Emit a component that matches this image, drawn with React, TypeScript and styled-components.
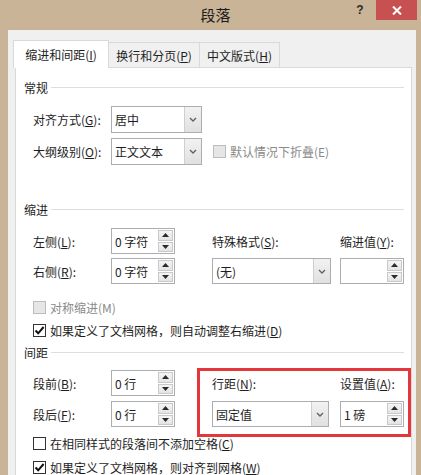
import styled, { createGlobalStyle } from "styled-components";

const GlobalStyle = createGlobalStyle`
  html, body { margin: 0; padding: 0; }
  body {
    width: 421px;
    height: 475px;
    overflow: hidden;
    font-family: "Noto Sans CJK SC", "Noto Sans", sans-serif;
    font-size: 12px;
    color: #1e1e1e;
  }
  * { box-sizing: border-box; }
`;

const Window = styled.div`
  display: flex;
  flex-direction: column;
  width: 421px;
  height: 475px;
  background: #c9b497;
  overflow: hidden;
`;

const TitleBar = styled.div`
  display: grid;
  grid-template-columns: 1fr auto 1fr;
  height: 30px;
  padding-left: 10px;
  flex-shrink: 0;
`;

const Title = styled.div`
  grid-column: 2;
  align-self: center;
  font-size: 15px;
  line-height: 30px;
  color: #1a1a1a;
`;

const Controls = styled.div`
  justify-self: end;
  align-self: start;
  display: flex;
  gap: 4px;
  height: 20px;
  margin-right: 4px;
`;

const HelpButton = styled.div`
  display: flex;
  align-items: center;
  justify-content: center;
  width: 24px;
  font-family: "Liberation Sans", Arial, sans-serif;
  font-weight: bold;
  font-size: 12px;
  color: #2b2b2b;
`;

const CloseButton = styled.div`
  display: flex;
  align-items: center;
  justify-content: center;
  width: 41px;
  background: #c75050;
`;

const Client = styled.div`
  flex: 1;
  display: flex;
  flex-direction: column;
  min-height: 0;
  margin: 0 5px 0 8px;
  padding: 10px 4px 0 7px;
  background: #f0f0f0;
`;

const TabList = styled.div`
  display: flex;
  align-items: flex-end;
  height: 27px;
  margin-left: -2px;
  position: relative;
  z-index: 1;
`;

const Tab = styled.div<{ $active?: boolean; $width: number }>`
  display: flex;
  align-items: center;
  justify-content: center;
  width: ${(p) => p.$width}px;
  height: ${(p) => (p.$active ? 28 : 25)}px;
  margin-bottom: ${(p) => (p.$active ? -1 : 0)}px;
  margin-left: ${(p) => (p.$active ? 0 : -1)}px;
  padding-bottom: ${(p) => (p.$active ? 1 : 0)}px;
  border: 1px solid #d9d9d9;
  border-bottom: none;
  background: ${(p) => (p.$active ? "#ffffff" : "#f0f0f0")};
  color: #1e1e1e;
  white-space: nowrap;
`;

const Panel = styled.div`
  flex: 1;
  background: #ffffff;
  border: 1px solid #d9d9d9;
  border-bottom: none;
  padding: 12px 7px 0 8px;
`;

const SectionHeader = styled.div<{ $top: number }>`
  display: flex;
  align-items: center;
  gap: 3px;
  height: 16px;
  line-height: 16px;
  margin-top: ${(p) => p.$top}px;
`;

const HeaderRule = styled.div`
  flex: 1;
  height: 1px;
  margin-top: -1px;
  background: #dcdfe2;
`;

const FormStack = styled.div`
  display: flex;
  flex-direction: column;
  gap: 5px;
  margin: 10px 0 0 9px;
`;

const Row = styled.div`
  display: flex;
  align-items: center;
  height: 27px;
`;

const FieldLabel = styled.div`
  width: 78px;
  white-space: nowrap;
`;

const GridLabel = styled.div`
  white-space: nowrap;
`;

const FieldGrid = styled.div<{ $gap: number; $top: number }>`
  position: relative;
  display: grid;
  grid-template-columns: 78px 101px 128px 64px;
  grid-template-rows: 26px 26px;
  row-gap: ${(p) => p.$gap}px;
  align-items: center;
  margin: ${(p) => p.$top}px 0 0 9px;
`;

const Highlight = styled.div`
  position: absolute;
  left: 164px;
  top: -2px;
  width: 214px;
  height: 69px;
  border: 3px solid #e4373c;
  pointer-events: none;
`;

const SelectBox = styled.div<{ $width: number }>`
  display: flex;
  width: ${(p) => p.$width}px;
  height: 100%;
  border: 1px solid #abadb3;
  background: #ffffff;
`;

const BoxValue = styled.div`
  flex: 1;
  display: flex;
  align-items: center;
  padding-left: 3px;
  white-space: nowrap;
`;

const DropButton = styled.div`
  display: flex;
  align-items: center;
  justify-content: center;
  width: 17px;
  border-left: 1px solid #cfcfcf;
  background: linear-gradient(#f2f2f2, #e0e0e0);
`;

const SpinBox = styled.div`
  display: flex;
  width: 64px;
  height: 100%;
  border: 1px solid #abadb3;
  background: #ffffff;
`;

const SpinButtons = styled.div`
  display: flex;
  flex-direction: column;
  gap: 1px;
  width: 16px;
  padding: 1px 1px 1px 0;
`;

const SpinButton = styled.div`
  flex: 1;
  display: flex;
  align-items: center;
  justify-content: center;
  border: 1px solid #c9c9c9;
  background: linear-gradient(#f4f4f4, #e4e4e4);
`;

const CheckList = styled.div<{ $gap: number; $top: number }>`
  display: flex;
  flex-direction: column;
  gap: ${(p) => p.$gap}px;
  margin: ${(p) => p.$top}px 0 0 9px;
`;

const CheckRow = styled.div<{ $disabled?: boolean; $indent?: number }>`
  display: flex;
  align-items: center;
  gap: 4px;
  height: 16px;
  margin-left: ${(p) => p.$indent ?? 0}px;
  color: ${(p) => (p.$disabled ? "#8a8a8a" : "#1e1e1e")};
  white-space: nowrap;
`;

const CheckSquare = styled.div<{ $disabled?: boolean }>`
  display: flex;
  align-items: center;
  justify-content: center;
  width: 13px;
  height: 13px;
  border: 1px solid ${(p) => (p.$disabled ? "#bcbcbc" : "#333333")};
  background: ${(p) => (p.$disabled ? "#e6e6e6" : "#ffffff")};
`;

const Key = styled.span`
  text-decoration: underline;
  text-underline-offset: 1px;
`;

const Chevron = () => (
  <svg width="8" height="5" viewBox="0 0 8 5">
    <path d="M1 1 L4 4 L7 1" fill="none" stroke="#5f5f5f" strokeWidth="1.3" />
  </svg>
);

const Triangle = ({ up }: { up?: boolean }) => (
  <svg width="7" height="4" viewBox="0 0 7 4">
    <polygon points={up ? "0,4 3.5,0 7,4" : "0,0 3.5,4 7,0"} fill="#2a2a2a" />
  </svg>
);

const Select = ({ width, value }: { width: number; value: string }) => (
  <SelectBox $width={width}>
    <BoxValue>{value}</BoxValue>
    <DropButton>
      <Chevron />
    </DropButton>
  </SelectBox>
);

const Spin = ({ value }: { value: string }) => (
  <SpinBox>
    <BoxValue>{value}</BoxValue>
    <SpinButtons>
      <SpinButton>
        <Triangle up />
      </SpinButton>
      <SpinButton>
        <Triangle />
      </SpinButton>
    </SpinButtons>
  </SpinBox>
);

const Check = ({
  checked,
  disabled,
  indent,
  children,
}: {
  checked?: boolean;
  disabled?: boolean;
  indent?: number;
  children: React.ReactNode;
}) => (
  <CheckRow $disabled={disabled} $indent={indent}>
    <CheckSquare $disabled={disabled}>
      {checked && (
        <svg width="11" height="11" viewBox="0 0 11 11">
          <path d="M1.5 5.5 L4.2 8.3 L9.6 2" fill="none" stroke="#111" strokeWidth="2" />
        </svg>
      )}
    </CheckSquare>
    <span>{children}</span>
  </CheckRow>
);

export default function App() {
  return (
    <>
      <GlobalStyle />
      <Window>
        <TitleBar>
          <Title>段落</Title>
          <Controls>
            <HelpButton>?</HelpButton>
            <CloseButton>
              <svg width="10" height="9" viewBox="0 0 10 9">
                <path d="M1 0.5 L9 8.5 M9 0.5 L1 8.5" stroke="#fff" strokeWidth="2" />
              </svg>
            </CloseButton>
          </Controls>
        </TitleBar>
        <Client>
          <TabList>
            <Tab $active $width={96}>
              缩进和间距(<Key>I</Key>)
            </Tab>
            <Tab $width={92}>
              换行和分页(<Key>P</Key>)
            </Tab>
            <Tab $width={81}>
              中文版式(<Key>H</Key>)
            </Tab>
          </TabList>
          <Panel>
            <SectionHeader $top={0}>
              常规
              <HeaderRule />
            </SectionHeader>
            <FormStack>
              <Row>
                <FieldLabel>
                  对齐方式(<Key>G</Key>):
                </FieldLabel>
                <Select width={91} value="居中" />
              </Row>
              <Row>
                <FieldLabel>
                  大纲级别(<Key>O</Key>):
                </FieldLabel>
                <Select width={91} value="正文文本" />
                <Check disabled indent={11}>
                  默认情况下折叠(E)
                </Check>
              </Row>
            </FormStack>

            <SectionHeader $top={37}>
              缩进
              <HeaderRule />
            </SectionHeader>
            <FieldGrid $gap={4} $top={10}>
              <GridLabel>
                左侧(<Key>L</Key>):
              </GridLabel>
              <Spin value="0 字符" />
              <GridLabel>
                特殊格式(<Key>S</Key>):
              </GridLabel>
              <GridLabel>
                缩进值(<Key>Y</Key>):
              </GridLabel>
              <GridLabel>
                右侧(<Key>R</Key>):
              </GridLabel>
              <Spin value="0 字符" />
              <Select width={119} value="(无)" />
              <Spin value="" />
            </FieldGrid>
            <CheckList $gap={7} $top={15}>
              <Check disabled>对称缩进(M)</Check>
              <Check checked>
                如果定义了文档网格，则自动调整右缩进(<Key>D</Key>)
              </Check>
            </CheckList>

            <SectionHeader $top={7}>
              间距
              <HeaderRule />
            </SectionHeader>
            <FieldGrid $gap={5} $top={9}>
              <GridLabel>
                段前(<Key>B</Key>):
              </GridLabel>
              <Spin value="0 行" />
              <GridLabel>
                行距(<Key>N</Key>):
              </GridLabel>
              <GridLabel>
                设置值(<Key>A</Key>):
              </GridLabel>
              <GridLabel>
                段后(<Key>F</Key>):
              </GridLabel>
              <Spin value="0 行" />
              <Select width={117} value="固定值" />
              <Spin value="1 磅" />
              <Highlight />
            </FieldGrid>
            <CheckList $gap={8} $top={8}>
              <Check>
                在相同样式的段落间不添加空格(<Key>C</Key>)
              </Check>
              <Check checked>
                如果定义了文档网格，则对齐到网格(<Key>W</Key>)
              </Check>
            </CheckList>
          </Panel>
        </Client>
      </Window>
    </>
  );
}
